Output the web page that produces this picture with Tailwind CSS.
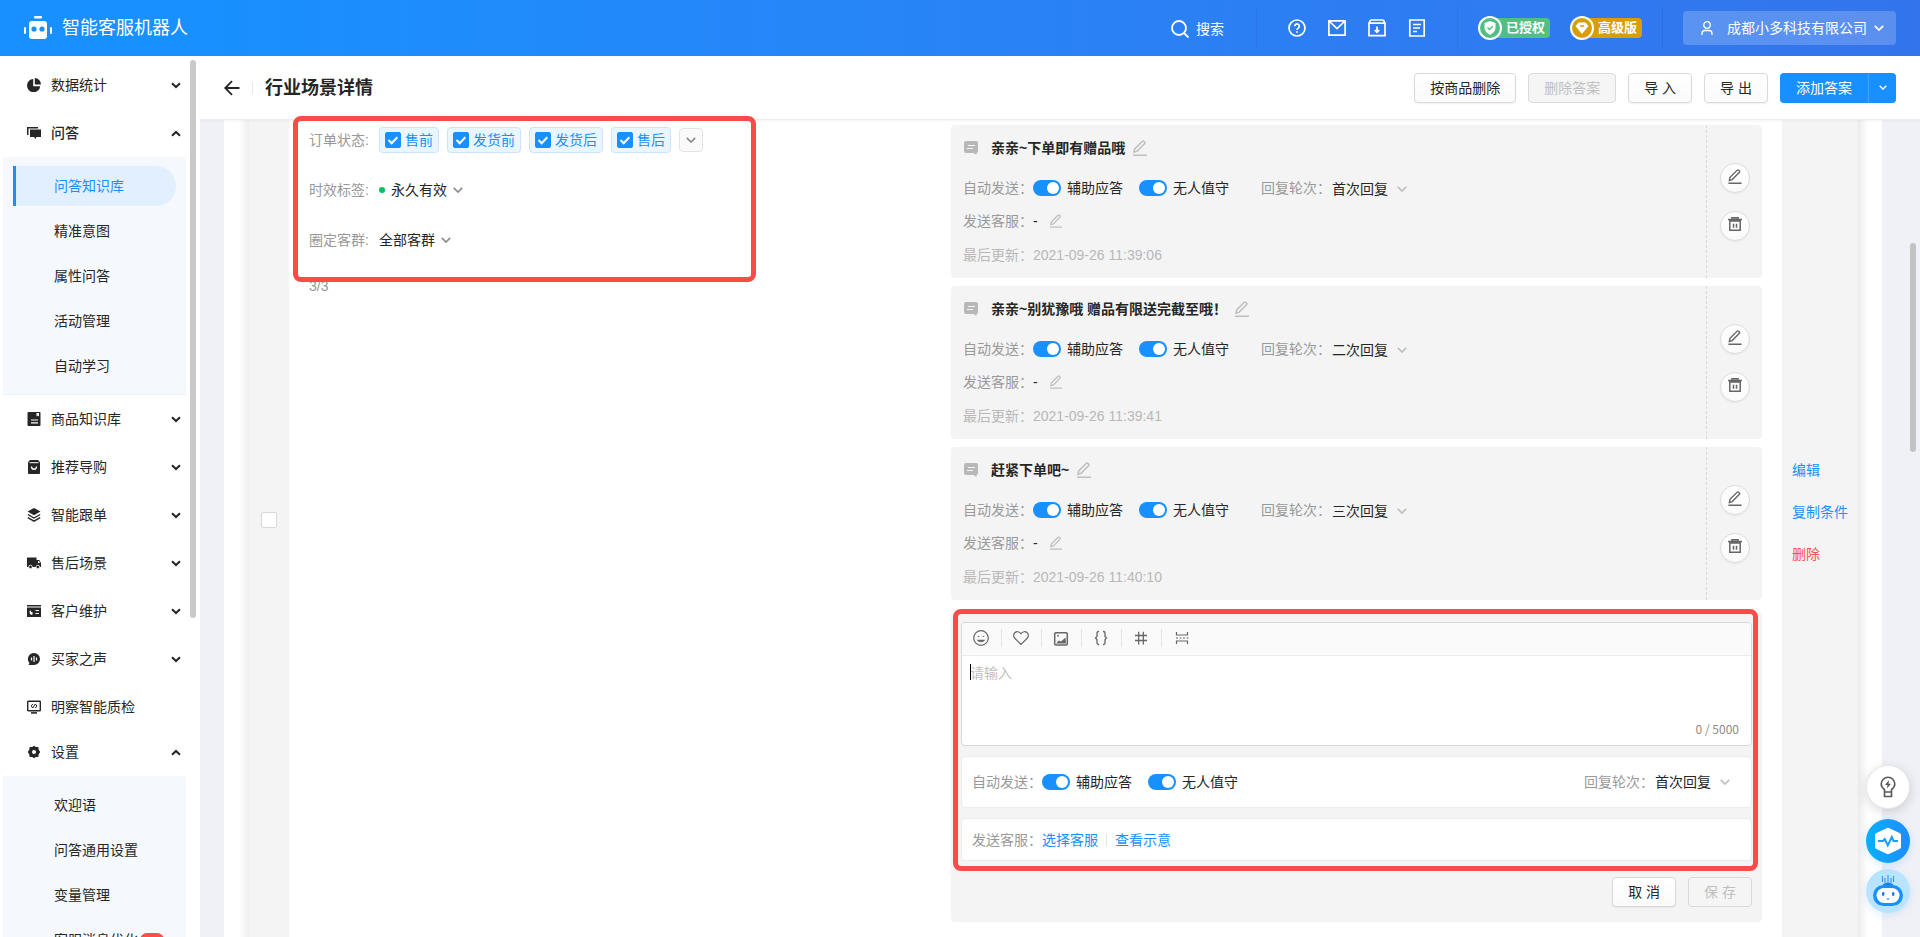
<!DOCTYPE html>
<html lang="zh-CN">
<head>
<meta charset="utf-8">
<meta name="viewport" content="width=device-width, initial-scale=1">
<title>行业场景详情</title>
<script src="https://cdn.jsdelivr.net/npm/@tailwindcss/browser@4"></script>
</head>
<body class="flex h-screen flex-col overflow-hidden bg-white font-['Liberation_Sans','Noto_Sans_CJK_SC',sans-serif] text-sm text-[#262626]">

<!-- shared icons -->
<svg class="hidden" aria-hidden="true">
  <symbol id="i-chevron" viewBox="0 0 10 6"><path d="M.8.8 5 5 9.200.8" fill="none" stroke="currentColor" stroke-width="1.700"/></symbol>
  <symbol id="i-caret" viewBox="0 0 10 7"><path d="M1 1.200 5 5 9 1.200" fill="none" stroke="currentColor" stroke-width="2"/></symbol>
  <symbol id="i-pen" viewBox="0 0 14 16"><path d="M0 15.200h14M1 12.200l.7-3.300L9.400 1.200a.9.9 0 0 1 1.300 0l1 1a.9.9 0 0 1 0 1.300L4 11.300z" fill="none" stroke="currentColor" stroke-width="1.500"/></symbol>
  <symbol id="i-trash" viewBox="0 0 14 14"><path d="M0 2.600h14M4 2V.7h6V2M1.800 4h10.400v9.200H1.800zM5.500 6.800v4M8.500 6.800v4" fill="none" stroke="currentColor" stroke-width="1.500"/></symbol>
  <symbol id="i-tick" viewBox="0 0 16 16"><path d="m3.500 8 3.200 3.200 5.600-6" fill="none" stroke="#fff" stroke-width="2"/></symbol>
  <symbol id="i-msg" viewBox="0 0 14 14"><path d="M2 0h10a2 2 0 0 1 2 2v8a2 2 0 0 1-1.500 2v2l-3-2H2a2 2 0 0 1-2-2V2a2 2 0 0 1 2-2z" fill="#b8b8b8"/><path d="M4 4.500h7M3 7.500h6" stroke="#f5f5f5" stroke-width="1.200"/></symbol>
</svg>

<header class="flex h-14 shrink-0 items-center bg-linear-to-r from-[#1890ff] from-10% to-[#3374ec] px-6 text-white">
  <svg class="h-6 w-7" viewBox="0 0 28 24" fill="currentColor"><rect x="10" y="0" width="8" height="2.400" rx="1"/><rect x="5" y="5" width="18" height="18" rx="3"/><rect x="0" y="11" width="2" height="7" rx="1"/><rect x="26" y="11" width="2" height="7" rx="1"/><circle cx="10" cy="13" r="2.600" fill="#1890ff"/><circle cx="18" cy="13" r="2.600" fill="#1890ff"/></svg>
  <h1 class="ml-2.5 text-lg leading-6">智能客服机器人</h1>

  <div class="ml-auto flex items-center">
    <button class="flex items-center gap-[7px] pt-0.5"><svg class="size-[18px]" viewBox="0 0 18 18" fill="none" stroke="currentColor" stroke-width="1.800"><circle cx="8" cy="8" r="7"/><path d="m13 13 4.500 4.500"/></svg>搜索</button>
    <span class="ml-8 h-10 w-px bg-[#2b74e6]"></span>
    <div class="mx-[30px] flex gap-5">
      <button class="grid size-5 place-items-center" aria-label="帮助"><svg class="size-[18px]" viewBox="0 0 18 18" fill="none" stroke="currentColor" stroke-width="1.700"><circle cx="9" cy="9" r="8"/><path d="M6.700 7.200a2.300 2.300 0 1 1 3.600 1.900c-.9.600-1.300.9-1.300 1.900M9 12.200v1.600"/></svg></button>
      <button class="grid size-5 place-items-center" aria-label="邮件"><svg class="size-[18px]" viewBox="0 0 18 18" fill="none" stroke="currentColor" stroke-width="1.700"><path d="M.9 1.800h16.200v14.400H.9zM1 2l8 7.500L17 2"/></svg></button>
      <button class="grid size-5 place-items-center" aria-label="下载"><svg class="size-[18px]" viewBox="0 0 18 18" fill="none" stroke="currentColor" stroke-width="1.700"><path d="M2.500 1h13M1 4.200h16v12.500H1zM9 7.500v5.500M6.700 11 9 13.300 11.300 11M2.500 1 1 4.500M15.500 1 17 4.500"/></svg></button>
      <button class="grid size-5 place-items-center" aria-label="文档"><svg class="size-[18px]" viewBox="0 0 18 18" fill="none" stroke="currentColor" stroke-width="1.700"><path d="M1.800 1h14.400v16H1.800zM5 5.500h8M5 9h7M5 12.500h4"/></svg></button>
    </div>
    <span class="h-10 w-px bg-[#2b74e6]"></span>
    <div class="mx-5 flex gap-5 text-[13px] font-bold leading-5">
      <span class="flex items-center"><span class="z-10 grid size-6 place-items-center rounded-full border-2 border-white bg-[#53be83]"><svg class="size-3.5" viewBox="0 0 14 14"><path d="M7 0 1.500 2v5c0 3 2.500 5.300 5.500 7 3-1.700 5.500-4 5.500-7V2z" fill="#fff"/><path d="m4.500 6.500 2 2 3.200-3.200" fill="none" stroke="#53be83" stroke-width="1.500"/></svg></span><span class="-ml-2 h-5 rounded-r bg-[#53be83] pl-3 pr-[5px]">已授权</span></span>
      <span class="flex items-center"><span class="z-10 grid size-6 place-items-center rounded-full border-2 border-white bg-[#d99d07]"><svg class="size-3.5" viewBox="0 0 14 14"><path d="M3.500 1.500h7L13.500 5 7 13 .5 5z" fill="#fff"/><path d="M5 5h4" stroke="#d99d07" stroke-width="1.500"/></svg></span><span class="-ml-2 h-5 rounded-r bg-[#d99d07] pl-3 pr-[5px]">高级版</span></span>
    </div>
    <span class="h-10 w-px bg-[#2b6ce0]"></span>
    <button class="ml-5 flex h-[34px] items-center rounded bg-white/20 pl-[18px] pr-3"><svg class="h-3.5 w-3" viewBox="0 0 12 14" fill="none" stroke="currentColor" stroke-width="1.300"><ellipse cx="6" cy="4" rx="3.200" ry="3.400"/><path d="M1 14v-1.500a3 3 0 0 1 3-3h4a3 3 0 0 1 3 3V14"/></svg><span class="ml-3.5">成都小多科技有限公司</span><svg class="ml-[7px] h-1.5 w-2.5"><use href="#i-chevron"/></svg></button>
  </div>
</header>

<div class="flex min-h-0 flex-1">
  <nav class="relative w-[200px] shrink-0 overflow-hidden pl-[3px] pt-[5px]">
    <div class="absolute right-1 top-1 h-[558px] w-1.5 rounded-full bg-[#c9c9c9]"></div>
    <div class="w-[183px]">
      <button class="flex h-12 w-full items-center pl-6 pr-[5px]"><svg class="size-3.5" viewBox="0 0 14 14" fill="currentColor"><path d="M6.200 1v7.200h7A6.600 6.600 0 1 1 6.200 1z"/><path d="M7.800 0A6.500 6.500 0 0 1 14 6.500H7.800z"/></svg><span class="ml-2.5">数据统计</span><svg class="ml-auto h-[7px] w-2.5"><use href="#i-caret"/></svg></button>
      <button class="flex h-12 w-full items-center pl-6 pr-[5px] font-medium"><svg class="size-3.5" viewBox="0 0 14 14" fill="currentColor"><path d="M0 1h11v1.500H1.500V9H0z"/><path d="M3 3.500h11v7.500H9.500L8.500 13l-1.500-2H3z"/></svg><span class="ml-2.5">问答</span><svg class="ml-auto h-[7px] w-2.5 rotate-180"><use href="#i-caret"/></svg></button>
      <ul class="flex flex-col gap-[5px] border-b border-[#e9f0f8] bg-[#f5f9fd] pb-2 pt-[9px] leading-10">
        <li class="px-2.5"><a href="#" class="block rounded-r-full border-l-[3px] border-[#1890ff] bg-[#e2efff] pl-[38px] text-[#1890ff]">问答知识库</a></li>
        <li><a href="#" class="block pl-[51px]">精准意图</a></li>
        <li><a href="#" class="block pl-[51px]">属性问答</a></li>
        <li><a href="#" class="block pl-[51px]">活动管理</a></li>
        <li><a href="#" class="block pl-[51px]">自动学习</a></li>
      </ul>
      <button class="flex h-12 w-full items-center pl-6 pr-[5px]"><svg class="size-3.5" viewBox="0 0 14 14" fill="currentColor"><rect x=".5" width="13" height="14" rx="1"/><path d="M4 8h7M4 10.800h7" stroke="#fff" stroke-width="1.200"/><path d="M9.500 1h2.500v3.500l-1.200-1-1.300 1z" fill="#fff"/></svg><span class="ml-2.5">商品知识库</span><svg class="ml-auto h-[7px] w-2.5"><use href="#i-caret"/></svg></button>
      <button class="flex h-12 w-full items-center pl-6 pr-[5px]"><svg class="size-3.5" viewBox="0 0 14 14" fill="currentColor"><path d="M3 0h8l2 2.200V13a1 1 0 0 1-1 1H2a1 1 0 0 1-1-1V2.200z"/><path d="M2.500 2.700h9" stroke="#fff"/><path d="M4.500 6.500a2.500 2.700 0 0 0 5 0" fill="none" stroke="#fff" stroke-width="1.400"/></svg><span class="ml-2.5">推荐导购</span><svg class="ml-auto h-[7px] w-2.5"><use href="#i-caret"/></svg></button>
      <button class="flex h-12 w-full items-center pl-6 pr-[5px]"><svg class="size-3.5" viewBox="0 0 14 14" fill="currentColor"><path d="m7 0 6.500 3.500L7 7.200.5 3.500z"/><path d="m.8 6.500 6.200 3.500 6.200-3.500M.8 9.600 7 13.200l6.200-3.600" fill="none" stroke="currentColor" stroke-width="1.400"/></svg><span class="ml-2.5">智能跟单</span><svg class="ml-auto h-[7px] w-2.5"><use href="#i-caret"/></svg></button>
      <button class="flex h-12 w-full items-center pl-6 pr-[5px]"><svg class="size-3.5" viewBox="0 0 14 14" fill="currentColor"><path d="M0 1.500h9.500v9.500H0zM9.500 4h2.800L14 7v4H9.500z"/><circle cx="3.500" cy="11" r="1.800" stroke="#fff" stroke-width=".8"/><circle cx="10.800" cy="11" r="1.800" stroke="#fff" stroke-width=".8"/><path d="M11 5h1l1 2h-2z" fill="#fff"/></svg><span class="ml-2.5">售后场景</span><svg class="ml-auto h-[7px] w-2.5"><use href="#i-caret"/></svg></button>
      <button class="flex h-12 w-full items-center pl-6 pr-[5px]"><svg class="size-3.5" viewBox="0 0 14 14" fill="currentColor"><path d="M0 1h14v1.600H0zM0 3.600h14V13H0z"/><path d="M8.500 6.500H12M8.500 9.500H12" stroke="#fff" stroke-width="1.200"/><path d="M5.500 6v4.500A2.200 2.200 0 1 1 4 6.300L4 8h1.500z" fill="#fff"/></svg><span class="ml-2.5">客户维护</span><svg class="ml-auto h-[7px] w-2.5"><use href="#i-caret"/></svg></button>
      <button class="flex h-12 w-full items-center pl-6 pr-[5px]"><svg class="size-3.5" viewBox="0 0 14 14" fill="currentColor"><path d="M7 1a6 6 0 1 1 0 12H1.500l1-2A6 6 0 0 1 7 1z"/><path d="M4.500 5.500v3M7 4v6M9.500 5.500v3" stroke="#fff" stroke-width="1.200"/></svg><span class="ml-2.5">买家之声</span><svg class="ml-auto h-[7px] w-2.5"><use href="#i-caret"/></svg></button>
      <button class="flex h-[45px] w-full items-center pl-6 pr-[5px] pt-0.5"><svg class="size-3.5" viewBox="0 0 14 14" fill="none" stroke="currentColor" stroke-width="1.400"><rect x=".7" y="1.200" width="12.600" height="9.600" rx=".6"/><path d="M4 12.900h6" stroke-width="1.600"/><path d="M5.800 4 4.200 6l1.600 2 2.500-4 1.600 2-1.600 2" stroke-width="1"/></svg><span class="ml-2.5">明察智能质检</span></button>
      <button class="flex h-12 w-full items-center pl-6 pr-[5px]"><svg class="size-3.5" viewBox="0 0 14 14" fill="currentColor"><path d="M7 .8 8.800 2h2.500l.4 2.400L13.200 7l-1.500 2.600-.4 2.400H8.800L7 13.200 5.200 12H2.700l-.4-2.400L.8 7l1.500-2.600L2.700 2h2.500z"/><circle cx="7" cy="7" r="2" fill="#fff"/></svg><span class="ml-2.5">设置</span><svg class="ml-auto h-[7px] w-2.5 rotate-180"><use href="#i-caret"/></svg></button>
      <ul class="flex flex-col gap-[5px] bg-[#f5f9fd] pb-2 pt-[9px] leading-10">
        <li><a href="#" class="block pl-[51px]">欢迎语</a></li>
        <li><a href="#" class="block pl-[51px]">问答通用设置</a></li>
        <li><a href="#" class="block pl-[51px]">变量管理</a></li>
        <li><a href="#" class="flex items-center pl-[51px]">客服消息优化<span class="ml-0.5 h-3.5 w-6 rounded-full bg-[#ff4d4f]"></span></a></li>
      </ul>
    </div>
  </nav>

  <main class="flex min-w-0 flex-1 flex-col">
    <div class="relative z-10 flex h-16 shrink-0 items-center border-b border-[#ececee] bg-white px-6 shadow-[0_1px_2px_rgba(0,0,0,0.05)]">
      <button aria-label="返回"><svg class="size-4" viewBox="0 0 16 16" fill="none" stroke="currentColor" stroke-width="1.800"><path d="M15.500 8H1.500M8 1.200 1.200 8 8 14.800"/></svg></button>
      <span class="ml-3 h-3 w-px bg-[#e8e8e8]"></span>
      <h2 class="ml-3 text-lg font-bold leading-6">行业场景详情</h2>
      <div class="ml-auto flex gap-3">
        <button class="h-[30px] rounded border border-[#d9d9d9] bg-linear-to-b from-white to-[#fafafa] px-[15px] shadow-[0_1px_2px_rgba(0,0,0,0.06)]">按商品删除</button>
        <button disabled class="h-[30px] rounded border border-[#d9d9d9] bg-[#f5f5f5] px-[15px] text-[#bfbfbf]">删除答案</button>
        <button class="h-[30px] rounded border border-[#d9d9d9] bg-linear-to-b from-white to-[#fafafa] px-[15px] shadow-[0_1px_2px_rgba(0,0,0,0.06)]">导 入</button>
        <button class="h-[30px] rounded border border-[#d9d9d9] bg-linear-to-b from-white to-[#fafafa] px-[15px] shadow-[0_1px_2px_rgba(0,0,0,0.06)]">导 出</button>
        <div class="flex rounded bg-[#1890ff] text-white shadow-[0_1px_2px_rgba(0,0,0,0.06)]"><button class="h-[30px] px-4">添加答案</button><button class="grid h-[30px] w-7 place-items-center border-l border-[#46a6ff]" aria-label="更多"><svg class="h-[5px] w-2"><use href="#i-chevron"/></svg></button></div>
      </div>
    </div>

    <div class="relative flex min-h-0 flex-1 bg-[#f0f1f6] pl-6 pr-[38px]">
      <div class="absolute right-1 top-[123px] h-[209px] w-1.5 rounded-full bg-[#c1c3c5]"></div>
      <div class="w-[25px] shrink-0 bg-linear-to-r from-white from-60% to-[#efefef]"></div>
      <div class="flex w-10 shrink-0 justify-center bg-[#f4f4f4] pt-[392px]"><input type="checkbox" aria-label="选择场景" class="size-4 appearance-none rounded-xs border border-[#d9d9d9] bg-white"></div>

      <div class="grid min-w-0 flex-1 grid-cols-[43fr_57fr] bg-white">
        <section class="relative pl-5 pt-[7px]">
          <div class="flex h-[26px] items-center">
            <span class="w-[70px] text-[#999]">订单状态:</span>
            <div class="flex items-center gap-2 text-[#1890ff]">
              <label class="relative flex h-[26px] items-center gap-1 rounded border border-[#c9e5ff] bg-[#eaf6ff] px-[5px]"><input type="checkbox" checked class="size-4 appearance-none rounded-xs border border-[#1890ff] checked:bg-[#1890ff]"><svg class="pointer-events-none absolute left-[5px] size-4"><use href="#i-tick"/></svg>售前</label>
              <label class="relative flex h-[26px] items-center gap-1 rounded border border-[#c9e5ff] bg-[#eaf6ff] px-[5px]"><input type="checkbox" checked class="size-4 appearance-none rounded-xs border border-[#1890ff] checked:bg-[#1890ff]"><svg class="pointer-events-none absolute left-[5px] size-4"><use href="#i-tick"/></svg>发货前</label>
              <label class="relative flex h-[26px] items-center gap-1 rounded border border-[#c9e5ff] bg-[#eaf6ff] px-[5px]"><input type="checkbox" checked class="size-4 appearance-none rounded-xs border border-[#1890ff] checked:bg-[#1890ff]"><svg class="pointer-events-none absolute left-[5px] size-4"><use href="#i-tick"/></svg>发货后</label>
              <label class="relative flex h-[26px] items-center gap-1 rounded border border-[#c9e5ff] bg-[#eaf6ff] px-[5px]"><input type="checkbox" checked class="size-4 appearance-none rounded-xs border border-[#1890ff] checked:bg-[#1890ff]"><svg class="pointer-events-none absolute left-[5px] size-4"><use href="#i-tick"/></svg>售后</label>
              <button class="grid size-6 place-items-center rounded border border-[#e3e3e3] bg-[#fafafa] text-[#8c8c8c]" aria-label="展开"><svg class="h-1.5 w-2.5"><use href="#i-chevron"/></svg></button>
            </div>
          </div>
          <div class="mt-6 flex h-[26px] items-center">
            <label for="validity" class="w-[70px] text-[#999]">时效标签:</label>
            <span class="mr-1.5 size-1.5 rounded-full bg-[#07c160]"></span>
            <span class="relative flex items-center"><select id="validity" class="w-[72px] appearance-none"><option>永久有效</option></select><svg class="pointer-events-none absolute right-0 h-1.5 w-2.5 text-[#8c8c8c]"><use href="#i-chevron"/></svg></span>
          </div>
          <div class="mt-6 flex h-[26px] items-center">
            <label for="audience" class="w-[70px] text-[#999]">圈定客群:</label>
            <span class="relative flex items-center"><select id="audience" class="w-[72px] appearance-none"><option>全部客群</option></select><svg class="pointer-events-none absolute right-0 h-1.5 w-2.5 text-[#8c8c8c]"><use href="#i-chevron"/></svg></span>
          </div>
          <p class="mt-[23px] leading-5 text-[#999]">3/3</p>
          <div class="pointer-events-none absolute -top-1 left-1 z-20 h-[166px] w-[463px] rounded-lg border-5 border-[#f94b47]"></div>
        </section>

        <section class="px-5 pt-[5px]">
          <div id="answers" class="flex flex-col gap-2"></div>

          <form class="relative mt-3 flex flex-col gap-2.5 rounded bg-[#f4f4f4] px-2.5 pb-[15px] pt-2.5">
            <div class="rounded border border-[#d9d9d9] bg-white">
              <div class="flex h-[33px] items-center divide-x divide-[#e4e4e4] rounded-t border-b border-[#ececec] bg-[#fafafa] pb-0.5 text-[#666]">
                <button type="button" class="grid h-[18px] w-10 place-items-center" aria-label="表情"><svg class="size-4" viewBox="0 0 16 16" fill="none" stroke="currentColor" stroke-width="1.200"><circle cx="8" cy="8" r="7.300"/><path d="M4.800 6.500h1.600M9.600 6.500h1.600M5 10.300c1.600 1.900 4.400 1.900 6 0z"/></svg></button>
                <button type="button" class="grid h-[18px] w-10 place-items-center" aria-label="收藏"><svg class="size-4" viewBox="0 0 16 16" fill="none" stroke="currentColor" stroke-width="1.200"><path d="M8 14.500 1.800 8.300a3.800 3.800 0 0 1 0-5.500c1.700-1.600 4.600-1.500 6.200.8 1.600-2.300 4.500-2.400 6.200-.8a3.800 3.800 0 0 1 0 5.500z"/></svg></button>
                <button type="button" class="grid h-[18px] w-10 place-items-center" aria-label="图片"><svg class="size-4" viewBox="0 0 16 16" fill="none" stroke="currentColor" stroke-width="1.500"><rect x="1.700" y="2.700" width="12.600" height="12.300" rx="1"/><path d="m3 13.500 3-3 2 1 4.500-4 .5 6z" fill="currentColor" stroke="none"/><path d="M4 5.800h2M5 4.800v2" stroke-width=".8"/></svg></button>
                <button type="button" class="grid h-[18px] w-10 place-items-center" aria-label="变量"><svg class="size-4" viewBox="0 0 16 16" fill="none" stroke="currentColor" stroke-width="1.300"><path d="M6 1.500h-.5A1.500 1.500 0 0 0 4 3v3.500L2.500 8 4 9.500V13a1.500 1.500 0 0 0 1.500 1.500H6M10 1.500h.5A1.500 1.500 0 0 1 12 3v3.500L13.500 8 12 9.500V13a1.500 1.500 0 0 1-1.500 1.500H10"/></svg></button>
                <button type="button" class="grid h-[18px] w-10 place-items-center" aria-label="话题"><svg class="size-4" viewBox="0 0 16 16" fill="none" stroke="currentColor" stroke-width="1.300"><path d="M2 5.500h12M2 10.500h12M5.700 1.800v12.600M10.300 1.800v12.600"/></svg></button>
                <button type="button" class="grid h-[18px] w-10 place-items-center" aria-label="分隔"><svg class="size-4" viewBox="0 0 16 16" fill="none" stroke="currentColor" stroke-width="1.200"><path d="M2.500 2v3h11V2M2.500 14v-3h11v3"/><path d="M2 8h12.500" stroke-dasharray="2 1.500"/></svg></button>
              </div>
              <div class="relative h-[89px]">
                <textarea aria-label="回复内容" placeholder="请输入" class="block size-full resize-none px-2 py-[7px] leading-5 outline-none placeholder:text-[#bfbfbf]"></textarea>
                <span class="absolute left-2 top-2 h-4 w-px bg-black"></span>
                <span class="absolute bottom-2 right-3 font-['Noto_Sans_CJK_SC',sans-serif] text-xs text-[#8c8c8c]">0 / 5000</span>
              </div>
            </div>
            <div class="flex h-[52px] items-center rounded border border-[#ececec] bg-white pl-2.5 pr-[21px]">
              <span class="w-[70px] text-[#999]">自动发送：</span>
              <label class="flex items-center gap-1.5"><input type="checkbox" checked class="relative h-4 w-7 appearance-none rounded-full bg-[#bfbfbf] before:absolute before:right-0.5 before:top-0.5 before:size-3 before:rounded-full before:bg-white checked:bg-[#1890ff]">辅助应答</label>
              <label class="ml-4 flex items-center gap-1.5"><input type="checkbox" checked class="relative h-4 w-7 appearance-none rounded-full bg-[#bfbfbf] before:absolute before:right-0.5 before:top-0.5 before:size-3 before:rounded-full before:bg-white checked:bg-[#1890ff]">无人值守</label>
              <label for="round-new" class="ml-auto w-[71px] text-[#999]">回复轮次：</label>
              <span class="relative flex items-center"><select id="round-new" class="w-[75px] appearance-none"><option>首次回复</option></select><svg class="pointer-events-none absolute right-0 h-1.5 w-2.5 text-[#bfbfbf]"><use href="#i-chevron"/></svg></span>
            </div>
            <div class="flex h-[43px] items-center rounded border border-[#ececec] bg-white px-2.5">
              <span class="w-[70px] text-[#999]">发送客服：</span>
              <a href="#" class="text-[#1890ff]">选择客服</a>
              <span class="mx-2 h-3 w-px bg-[#e4e4e4]"></span>
              <a href="#" class="text-[#1890ff]">查看示意</a>
            </div>
            <div class="mt-1.5 flex justify-end gap-3">
              <button type="button" class="h-[30px] rounded border border-[#d9d9d9] bg-linear-to-b from-white to-[#fafafa] px-[15px] shadow-[0_1px_2px_rgba(0,0,0,0.06)]">取 消</button>
              <button type="submit" disabled class="h-[30px] rounded border border-[#d9d9d9] bg-[#f5f5f5] px-[15px] text-[#bfbfbf]">保 存</button>
            </div>
            <div class="pointer-events-none absolute -top-[3px] left-0.5 right-1 h-[262px] rounded-lg border-5 border-[#f94b47]"></div>
          </form>
        </section>
      </div>

      <div class="flex w-[76px] shrink-0 flex-col gap-[22px] bg-[#f4f4f4] pl-2.5 pt-[340px] leading-5 text-[#1890ff]">
        <a href="#">编辑</a>
        <a href="#">复制条件</a>
        <a href="#" class="text-[#ff4d4f]">删除</a>
      </div>
      <div class="w-6 shrink-0 bg-linear-to-l from-white from-60% to-[#ebebeb]"></div>
    </div>
  </main>
</div>

<!-- floating helpers -->
<div class="fixed bottom-6 right-2.5 z-30 flex flex-col">
  <button class="grid size-11 place-items-center rounded-full border border-[#e6e6e6] bg-white text-[#595959] shadow-[0_3px_12px_rgba(0,0,0,0.15)]" aria-label="提示"><svg class="h-[22px] w-4" viewBox="0 0 16 22" fill="none" stroke="currentColor" stroke-width="1.600"><path d="M4.500 16v-2.500C2.500 12 1.200 10.300 1.200 8a6.800 6.800 0 0 1 13.600 0c0 2.300-1.300 4-3.300 5.500V16zM4.500 16v4.500h7V16"/><path d="M9 4 5 9h2.500L7 12.500 11 7.800H8.500z" fill="currentColor" stroke="none"/></svg></button>
  <button class="mt-2.5 grid size-11 place-items-center rounded-full bg-linear-to-r from-[#07b0fa] to-[#1d8cff] shadow-[0_2px_8px_rgba(24,144,255,0.2)]" aria-label="诊断"><svg class="size-7" viewBox="0 0 28 28"><path d="M12.500 1.200a3 3 0 0 1 3 0l10.500 5a2 2 0 0 1 1 1.700v12.200a2 2 0 0 1-1 1.700l-10.500 5a3 3 0 0 1-3 0L2 21.800a2 2 0 0 1-1-1.700V7.900a2 2 0 0 1 1-1.700z" fill="#fff"/><path d="M4 14h5l1.800-2 3 6.500 4-8.500 1.700 4H24" fill="none" stroke="#16a0f8" stroke-width="2"/></svg></button>
  <button class="mt-1.5 grid size-11 place-items-center rounded-full bg-[#b9e4ff] shadow-[0_2px_8px_rgba(24,144,255,0.15)]" aria-label="机器人"><svg class="h-8 w-[30px]" viewBox="0 0 30 32"><path d="M15 0v9M12 3v5M18 3v5M9.500 1v6M20.500 1v6" stroke="#3a9cf0" stroke-width="1.200"/><rect x="0" y="10" width="30" height="21" rx="10.500" fill="#1890ff"/><path d="M9 10q6-5 12 0z" fill="#1b7fe8"/><rect x="3.500" y="13" width="23" height="15" rx="7.500" fill="#fff"/><rect x="9" y="17" width="2.400" height="4" rx="1.200" fill="#1e7ee6"/><rect x="19" y="17" width="2.400" height="4" rx="1.200" fill="#1e7ee6"/><path d="M13.500 23.500h3L15 25.300z" fill="#1e7ee6"/></svg></button>
</div>

<script>
const answers = [
  ['亲亲~下单即有赠品哦', '首次回复', '2021-09-26 11:39:06'],
  ['亲亲~别犹豫哦 赠品有限送完截至哦！', '二次回复', '2021-09-26 11:39:41'],
  ['赶紧下单吧~', '三次回复', '2021-09-26 11:40:10'],
];
const toggle = 'relative h-4 w-7 appearance-none rounded-full bg-[#bfbfbf] before:absolute before:right-0.5 before:top-0.5 before:size-3 before:rounded-full before:bg-white checked:bg-[#1890ff]';
const round = 'grid size-[30px] place-items-center rounded-full border border-[#dcdcdc] bg-linear-to-b from-white to-[#fafafa] pb-[3px] shadow-[0_1px_2px_rgba(0,0,0,0.06)]';
document.getElementById('answers').innerHTML = answers.map(([title, turn, time], i) => `
  <article class="flex rounded bg-[#f4f4f4] leading-5">
    <div class="min-w-0 flex-1 px-3 pb-[13px] pt-[11px] text-[#999]">
      <div class="flex h-6 items-center text-[#262626]"><svg class="ml-px mr-[13px] size-3.5"><use href="#i-msg"/></svg><h3 class="font-bold">${title}</h3><button class="ml-2 text-[#bfbfbf]" aria-label="编辑标题"><svg class="h-4 w-3.5"><use href="#i-pen"/></svg></button></div>
      <div class="mt-[18px] flex h-5 items-center">
        <span class="w-[70px]">自动发送：</span>
        <label class="flex items-center gap-1.5 text-[#262626]"><input type="checkbox" checked class="${toggle}">辅助应答</label>
        <label class="ml-4 flex items-center gap-1.5 text-[#262626]"><input type="checkbox" checked class="${toggle}">无人值守</label>
        <label for="round-${i}" class="ml-8 w-[71px]">回复轮次：</label>
        <span class="relative flex items-center pt-0.5 text-[#262626]"><select id="round-${i}" class="w-[75px] appearance-none"><option>${turn}</option></select><svg class="pointer-events-none absolute right-0 h-1.5 w-2.5 text-[#bfbfbf]"><use href="#i-chevron"/></svg></span>
      </div>
      <div class="mt-[13px] flex h-5 items-center"><span class="w-[70px]">发送客服：</span><span class="text-[#262626]">-</span><button class="ml-3 text-[#bfbfbf]" aria-label="编辑客服"><svg class="h-3.5 w-3"><use href="#i-pen"/></svg></button></div>
      <div class="mt-3.5 flex h-5 items-center text-[#b8b8b8]"><span class="w-[70px]">最后更新：</span><time>${time}</time></div>
    </div>
    <div class="flex w-14 flex-col items-center justify-center gap-[18px] border-l border-dashed border-[#d9d9d9] text-[#666]">
      <button class="${round}" aria-label="编辑"><svg class="h-[15px] w-3.5"><use href="#i-pen"/></svg></button>
      <button class="${round}" aria-label="删除"><svg class="size-3.5"><use href="#i-trash"/></svg></button>
    </div>
  </article>`).join('');
</script>
</body>
</html>
